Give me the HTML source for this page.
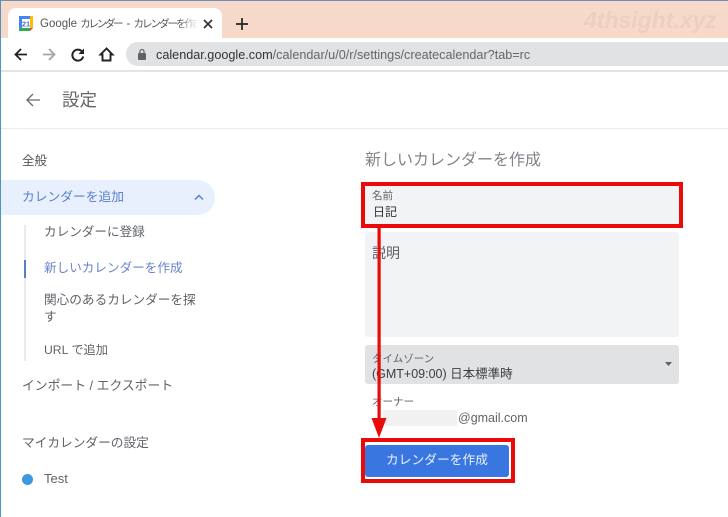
<!DOCTYPE html>
<html lang="ja">
<head>
<meta charset="utf-8">
<style>
html,body{margin:0;padding:0;background:#fff}
#p{position:relative;width:728px;height:517px;overflow:hidden;background:#fff;font-family:"Liberation Sans","Noto Sans CJK JP",sans-serif;color:#5f6368;filter:blur(.3px)}
#p div,#p svg{position:absolute}
.t{white-space:nowrap;line-height:18px}
</style>
</head>
<body>
<div id="p">
<div style="left:0;top:0;width:728px;height:38px;background:#f6d9c9"></div>
<div style="left:0;top:0;width:728px;height:1px;background:#6f8fb8"></div>
<div style="left:0;top:0;width:1px;height:517px;background:#4f93bf"></div>
<div style="left:8px;top:8px;width:214px;height:32px;background:#fff;border-radius:8px 8px 0 0"></div>
<div style="left:1px;top:38px;width:727px;height:32px;background:#fff"></div>
<svg style="left:18px;top:15px" width="16" height="17" viewBox="0 0 16 17"><rect x="1" y="1" width="14" height="15" fill="#fff"/><path d="M1 4V1h14v3z" fill="#4285f4"/><path d="M1 1h3v15H1z" fill="#4285f4"/><path d="M1 13h11v3H3a2 2 0 0 1-2-2z" fill="#34a853"/><path d="M12 1h3v12h-3z" fill="#fbbc04"/><path d="M12 13h3l-3 3z" fill="#ea4335"/><text x="8" y="11.500" font-size="7.500" font-family="Liberation Sans" font-weight="700" fill="#4a76c8" text-anchor="middle">21</text></svg>
<div class="t" style="left:40px;top:15px;width:158px;overflow:hidden;font-size:11.500px;color:#555">Google <span style="font-size:10.500px;letter-spacing:-2.300px">カレンダー</span> <span style="margin-left:2px">-</span> <span style="font-size:10.500px;letter-spacing:-2px">カレンダーを作成</span></div>
<div style="left:178px;top:15px;width:20px;height:18px;background:linear-gradient(90deg,rgba(255,255,255,0),#fff)"></div>
<svg style="left:202px;top:18px" width="12" height="12" viewBox="0 0 12 12"><path d="M2 2l8 8M10 2l-8 8" stroke="#333" stroke-width="1.700" fill="none"/></svg>
<svg style="left:235px;top:17px" width="14" height="14" viewBox="0 0 14 14"><path d="M7 1v12M1 7h12" stroke="#222" stroke-width="1.700" fill="none"/></svg>
<svg style="left:14px;top:48px" width="14" height="14" viewBox="0 0 14 14"><path d="M13 6.500H2M7 1L1.500 6.500 7 12" stroke="#222" stroke-width="1.800" fill="none"/></svg>
<svg style="left:42px;top:48px" width="14" height="14" viewBox="0 0 14 14"><path d="M1 6.500h11M7 1l5.500 5.500L7 12" stroke="#a4a4a4" stroke-width="1.800" fill="none"/></svg>
<svg style="left:70px;top:47px" width="16" height="16" viewBox="0 0 16 16"><path d="M13.200 9.500A5.500 5.500 0 1 1 12 4.500" stroke="#222" stroke-width="2" fill="none"/><path d="M14 1.500v5.500H8.500z" fill="#222"/></svg>
<svg style="left:98px;top:46px" width="17" height="17" viewBox="0 0 17 17"><path d="M8.500 2.500L2.500 8.500h2v6h8v-6h2z" stroke="#222" stroke-width="1.900" fill="none"/></svg>
<div style="left:126px;top:42px;width:620px;height:24px;border-radius:12px;background:#e1e2e3"></div>
<svg style="left:136px;top:48px" width="12" height="13" viewBox="0 0 12 13"><rect x="2" y="5" width="8" height="7" rx="1" fill="#5f6368"/><path d="M4 5.500V3.500a2 2 0 0 1 4 0v2" stroke="#5f6368" stroke-width="1.200" fill="none"/></svg>
<div class="t" style="left:156px;top:46px;font-size:12.650px;color:#666"><span style="color:#333">calendar.google.com</span>/calendar/u/0/r/settings/createcalendar?tab=rc</div>
<div style="left:1px;top:70px;width:727px;height:2px;background:#e4e4e4"></div>
<div class="t" style="left:584px;top:8px;font-size:23px;line-height:24px;font-weight:700;font-style:italic;color:#edcfc0">4thsight.xyz</div>

<svg style="left:25px;top:92px" width="16" height="16" viewBox="0 0 16 16"><path d="M15 8H2M8 2L2 8l6 6" stroke="#6a6a6a" stroke-width="1.300" fill="none"/></svg>
<div class="t" style="left:62px;top:90px;font-size:17.500px;line-height:20px;color:#666">設定</div>
<div style="left:1px;top:128px;width:727px;height:1px;background:#e8eaed"></div>

<div class="t" style="left:22px;top:152px;font-size:12.500px;color:#555">全般</div>
<div style="left:1px;top:180px;width:214px;height:35px;background:#e8f0fe;border-radius:0 18px 18px 0"></div>
<div class="t" style="left:22px;top:188px;font-size:12.750px;color:#5a7fd0">カレンダーを追加</div>
<svg style="left:193px;top:193px" width="12" height="9" viewBox="0 0 12 9"><path d="M2 6.500l4-4 4 4" stroke="#5a7fd0" stroke-width="1.500" fill="none"/></svg>
<div style="left:24px;top:225px;width:2px;height:136px;background:#e8eaed"></div>
<div style="left:24px;top:260px;width:2px;height:18px;background:#5a7fc0"></div>
<div class="t" style="left:44px;top:223px;font-size:12.600px;color:#5f6368">カレンダーに登録</div>
<div class="t" style="left:44px;top:259px;font-size:12.600px;color:#6a84cc">新しいカレンダーを作成</div>
<div class="t" style="left:44px;top:291px;font-size:12.650px;color:#5f6368">関心のあるカレンダーを探</div>
<div class="t" style="left:44px;top:308px;font-size:12.650px;color:#5f6368">す</div>
<div class="t" style="left:44px;top:341px;font-size:12.200px;color:#5f6368">URL で追加</div>
<div class="t" style="left:22px;top:377px;font-size:12.800px;color:#5f6368">インポート / エクスポート</div>
<div class="t" style="left:22px;top:434px;font-size:12.700px;color:#5f6368">マイカレンダーの設定</div>
<div style="left:22px;top:474px;width:11px;height:11px;border-radius:50%;background:#3f97e0"></div>
<div class="t" style="left:44px;top:470px;font-size:13px;color:#5f6368">Test</div>

<div class="t" style="left:365px;top:152px;font-size:16px;color:#80868b">新しいカレンダーを作成</div>
<div style="left:365px;top:186px;width:314px;height:38px;background:#f1f3f4"></div>
<div style="left:361px;top:182px;width:314px;height:38px;border:4px solid #ea0a0a"></div>
<div class="t" style="left:372px;top:187px;font-size:10.500px;color:#5f6368">名前</div>
<div class="t" style="left:373px;top:203px;font-size:12px;color:#333">日記</div>
<div style="left:365px;top:232px;width:314px;height:105px;background:#f1f3f4;border-radius:3px"></div>
<div class="t" style="left:372px;top:244px;font-size:14px;color:#5f6368">説明</div>
<div style="left:365px;top:345px;width:314px;height:39px;background:#e0e2e3;border-radius:3px"></div>
<div class="t" style="left:372px;top:350px;font-size:10.500px;color:#5f6368">タイムゾーン</div>
<div class="t" style="left:372px;top:365px;font-size:12.500px;color:#3c4043">(GMT+09:00) 日本標準時</div>
<svg style="left:664px;top:361px" width="9" height="6" viewBox="0 0 9 6"><path d="M1 1h7L4.500 5z" fill="#5f6368"/></svg>
<div class="t" style="left:372px;top:393px;font-size:10.500px;color:#5f6368">オーナー</div>
<div style="left:383px;top:410px;width:74px;height:16px;background:#f1f1f1"></div>
<div class="t" style="left:458px;top:409px;font-size:12.500px;color:#5f6368">@gmail.com</div>

<div style="left:361px;top:438px;width:146px;height:37px;border:4px solid #ea0a0a;background:#fff"></div>
<div style="left:365px;top:445px;width:144px;height:32px;background:#3a76e0;border-radius:3px"></div>
<div class="t" style="left:365px;top:451px;width:144px;text-align:center;font-size:12.750px;color:#e8f0fe">カレンダーを作成</div>
<svg style="left:370px;top:226px" width="18" height="214" viewBox="0 0 18 214"><path d="M7.500 0h3.200v195h-3.200z" fill="#ea0a0a"/><path d="M1.500 192h15L9 212z" fill="#ea0a0a"/></svg>
</div>
</body>
</html>
